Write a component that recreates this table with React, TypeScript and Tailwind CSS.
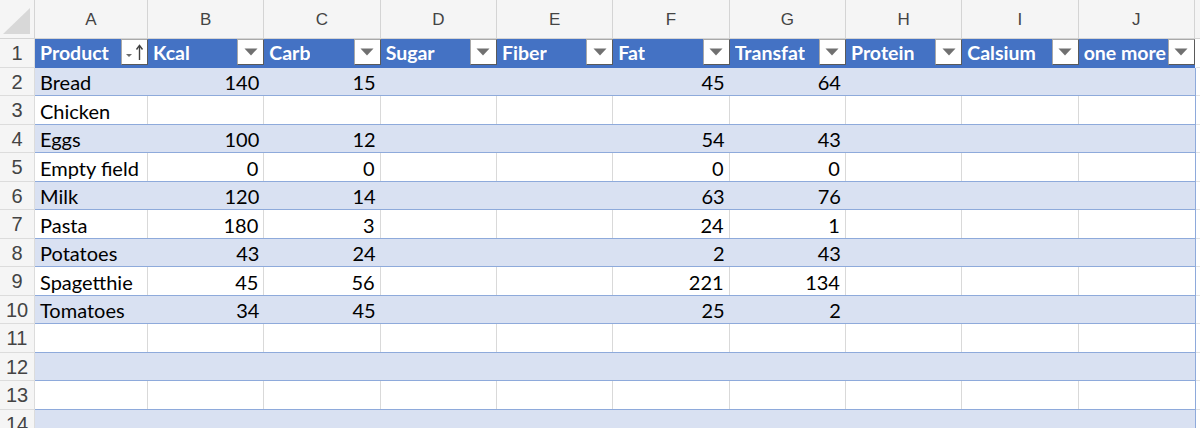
import React from "react";

const cols = ["A", "B", "C", "D", "E", "F", "G", "H", "I", "J"];
const headers = ["Product", "Kcal", "Carb", "Sugar", "Fiber", "Fat", "Transfat", "Protein", "Calsium", "one more"];
const data: (string | number | null)[][] = [
  ["Bread", 140, 15, null, null, 45, 64, null, null, null],
  ["Chicken", null, null, null, null, null, null, null, null, null],
  ["Eggs", 100, 12, null, null, 54, 43, null, null, null],
  ["Empty field", 0, 0, null, null, 0, 0, null, null, null],
  ["Milk", 120, 14, null, null, 63, 76, null, null, null],
  ["Pasta", 180, 3, null, null, 24, 1, null, null, null],
  ["Potatoes", 43, 24, null, null, 2, 43, null, null, null],
  ["Spagetthie", 45, 56, null, null, 221, 134, null, null, null],
  ["Tomatoes", 34, 45, null, null, 25, 2, null, null, null],
  [null, null, null, null, null, null, null, null, null, null],
  [null, null, null, null, null, null, null, null, null, null],
  [null, null, null, null, null, null, null, null, null, null],
  [null, null, null, null, null, null, null, null, null, null],
];

function colW(i: number) {
  return i === 0 ? "w-[113px]" : "w-[116.33px]";
}

function FilterButton({ sorted }: { sorted?: boolean }) {
  return (
    <div className="w-[27px] h-[26px] shrink-0 bg-white border border-[#a9a9a9] border-r-[#5a5a5a] border-b-[#5a5a5a] flex items-center justify-center">
      {sorted ? (
        <svg width="22" height="22" viewBox="0 0 22 22">
          <path d="M2 13 L8 13 L5 16 Z" fill="#6b6b6b" />
          <path d="M15.5 19 L15.5 5" stroke="#404040" strokeWidth="1.4" />
          <path d="M12.5 8.5 L15.5 4.5 L18.5 8.5" stroke="#404040" strokeWidth="1.4" fill="none" />
        </svg>
      ) : (
        <svg width="14" height="8" viewBox="0 0 14 8">
          <path d="M0.5 0.5 L13.5 0.5 L7 7.5 Z" fill="#707070" />
        </svg>
      )}
    </div>
  );
}

export default function App() {
  return (
    <div className="w-[1200px] h-[428px] overflow-hidden bg-white [font-family:Lato,'Liberation_Sans',sans-serif] text-black">
      {/* column letters */}
      <div className="flex h-[39px]">
        <div className="w-[35px] shrink-0 bg-[#f5f5f5] border-r border-b border-[#d4d4d4] relative">
          <svg className="absolute left-[3px] top-[8px]" width="28" height="27" viewBox="0 0 28 27">
            <path d="M27 0 L27 26 L0 26 Z" fill="#d8d8d8" />
          </svg>
        </div>
        {cols.map((c, i) => (
          <div
            key={c}
            className={`${colW(i)} shrink-0 bg-[#f5f5f5] border-r border-b border-[#d4d4d4] flex items-center justify-center pt-[2px] text-[17px] text-[#444] [font-family:'Liberation_Sans',sans-serif]`}
          >
            {c}
          </div>
        ))}
        <div className="flex-1 bg-[#f5f5f5] border-b border-[#d4d4d4]" />
      </div>

      {/* row 1 headers */}
      <div className="flex h-[28.5px]">
        <div className="w-[35px] shrink-0 bg-[#f5f5f5] border-r border-b border-[#dcdcdc] flex items-center justify-center pt-[1px] text-[20px] text-[#444] [font-family:'Liberation_Sans',sans-serif]">
          1
        </div>
        {headers.map((h, i) => (
          <div key={h} className={`${colW(i)} shrink-0 bg-[#4472c4] flex items-start justify-between pl-[5px] overflow-hidden`}>
            <span className="text-white font-bold text-[19.5px] leading-[28px] whitespace-nowrap overflow-hidden">{h}</span>
            <FilterButton sorted={i === 0} />
          </div>
        ))}
        <div className="flex-1 border-b border-[#e2e2e2] border-l-2 border-l-white" />
      </div>

      {/* data rows */}
      {data.map((row, r) => {
        const n = r + 2;
        const band = n % 2 === 0;
        return (
          <div key={n} className="flex h-[28.5px]">
            <div className="w-[35px] shrink-0 bg-[#f5f5f5] border-r border-b border-[#dcdcdc] flex items-center justify-center pt-[1px] text-[20px] text-[#444] [font-family:'Liberation_Sans',sans-serif]">
              {n}
            </div>
            <div
              className={
                band
                  ? "flex shrink-0 bg-[#d9e1f2] border-b border-r border-[#8eaadb]"
                  : "flex shrink-0 bg-white border-b border-r border-[#8eaadb]"
              }
            >
              {row.map((v, i) => (
                <div
                  key={i}
                  className={`${i === 0 ? "w-[113px]" : "w-[116.33px]"} ${
                    i === 9 ? "w-[115.33px]" : ""
                  } shrink-0 flex items-center pt-[2px] text-[20px] ${
                    typeof v === "number" ? "justify-end pr-[5px]" : "justify-start pl-[5px]"
                  } ${!band && i < 9 ? "border-r border-[#d9d9d9]" : ""} whitespace-nowrap`}
                >
                  {v}
                </div>
              ))}
            </div>
            <div className="flex-1 border-b border-[#e2e2e2]" />
          </div>
        );
      })}
    </div>
  );
}
